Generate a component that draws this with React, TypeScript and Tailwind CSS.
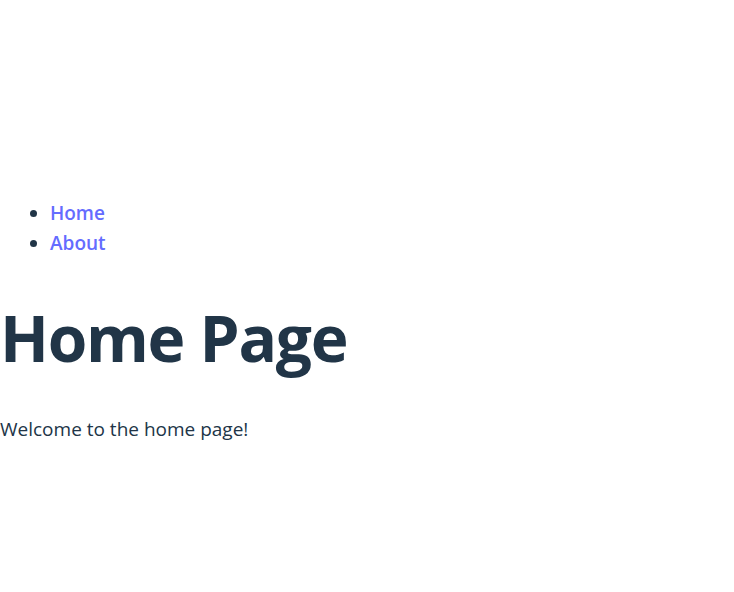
export default function App() {
  return (
    <main
      className="min-h-screen bg-white text-[#213547]"
      style={{ fontFamily: '"Open Sans", "Noto Sans", Arial, sans-serif' }}
    >
      <div className="pt-[198px]">
        {/* NAV */}
        <nav>
          <ul className="list-disc pl-[50px] text-[19px] leading-[30px] marker:text-[#213547]">
            <li>
              <a href="#" className="font-semibold text-[#646cff]">
                Home
              </a>
            </li>
            <li>
              <a href="#" className="font-semibold text-[#646cff]">
                About
              </a>
            </li>
          </ul>
        </nav>

        {/* PAGE */}
        <h1 className="mt-[45px] text-[64px] font-bold leading-[70px] tracking-[-0.02em]">
          Home Page
        </h1>
        <p className="mt-[41px] text-[19px] leading-[30px]">Welcome to the home page!</p>
      </div>
    </main>
  );
}
